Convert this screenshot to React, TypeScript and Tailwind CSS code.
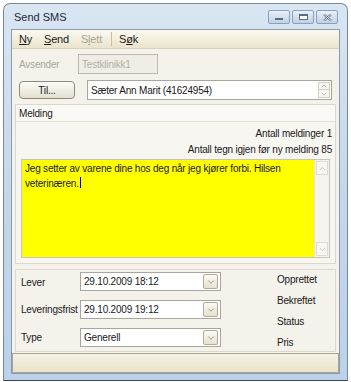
import { ChevronDown, ChevronUp } from 'lucide-react';

function DropButton() {
  return (
    <div className="flex h-[15px] w-[15px] items-center justify-center rounded-[2px] border border-[#b4aa96] bg-gradient-to-b from-[#fbfaf6] to-[#e6e0d0]">
      <ChevronDown size={10} strokeWidth={1.5} className="text-[#6e6a60]" />
    </div>
  );
}

function Combo({ value }: { value: string }) {
  return (
    <div className="flex h-[19px] w-[141px] items-center justify-between border border-[#a9a79c] bg-white pl-[3px] pr-[2px]">
      <span>{value}</span>
      <DropButton />
    </div>
  );
}

export default function App() {
  return (
    <div className="h-[382px] w-[351px] bg-white px-[3px] pb-[1px] pt-[3px] text-[10px] tracking-[-0.2px] text-[#1a1a1a] [font-family:'Liberation_Sans',Arial,sans-serif]">
      <div className="flex h-full flex-col rounded-t-[7px] border border-[#7d8896] border-b-[#3d4650] bg-gradient-to-b from-[#d9e6f3] via-[#c4d7ec] to-[#bcd2ea] px-[7px] pb-[6px]">
        {/* Title bar */}
        <div className="flex h-[25px] items-center justify-between pl-[3px]">
          <span className="pt-[1px] text-[11px] tracking-normal text-[#1c2a3a]">Send SMS</span>
          <div className="flex gap-[2px] pr-[2px] pt-[1px]">
            <div className="flex h-[14px] w-[22px] items-end justify-center rounded-[2px] border border-[#8ba0ba] bg-gradient-to-b from-[#e9f0f8] to-[#bfd1e6] pb-[3px]">
              <div className="h-[2px] w-[8px] border border-[#5c6b80] bg-white" />
            </div>
            <div className="flex h-[14px] w-[22px] items-center justify-center rounded-[2px] border border-[#8ba0ba] bg-gradient-to-b from-[#e9f0f8] to-[#bfd1e6]">
              <div className="h-[6px] w-[9px] border border-[#5c6b80] border-t-2 bg-white" />
            </div>
            <div className="flex h-[14px] w-[22px] items-center justify-center rounded-[2px] border border-[#8ba0ba] bg-gradient-to-b from-[#e9f0f8] to-[#bfd1e6]">
              <svg width="9" height="7" viewBox="0 0 9 7">
                <path d="M1 0.5 L8 6.5 M8 0.5 L1 6.5" stroke="#5c6b80" strokeWidth="2" />
                <path d="M1 0.5 L8 6.5 M8 0.5 L1 6.5" stroke="#ffffff" strokeWidth="0.8" />
              </svg>
            </div>
          </div>
        </div>

        {/* Client */}
        <div className="flex flex-1 flex-col border border-[#8d9aaa] bg-[#f4f2eb]">
          {/* Menu */}
          <div className="flex h-[19px] items-center gap-[12px] border-b border-[#d8d2bd] bg-gradient-to-b from-[#fbf9f1] to-[#ebe4cb] pl-[7px] text-[11px]">
            <span><u>N</u>y</span>
            <span><u>S</u>end</span>
            <span className="text-[#a7a396]">S<u>l</u>ett</span>
            <span className="flex items-center gap-[7px]">
              <span className="-ml-[3px] h-[14px] w-px bg-[#c4bca4]" />
              <span>S<u>ø</u>k</span>
            </span>
          </div>

          {/* Avsender */}
          <div className="mt-[5px] flex items-center pl-[7px]">
            <span className="w-[59px] text-[#a9a69c]">Avsender</span>
            <div className="flex h-[20px] w-[80px] items-center border border-[#bdb9ae] bg-[#efede6] pl-[3px] text-[#b3b0a6]">Testklinikk1</div>
          </div>

          {/* Til */}
          <div className="mt-[6px] flex items-center pl-[7px] pr-[7px]">
            <div className="flex h-[18px] w-[56px] items-center justify-center rounded-[4px] border border-[#8e8a7e] bg-gradient-to-b from-[#fcfbf7] to-[#e5e0d1]">Til...</div>
            <div className="ml-[12px] flex h-[20px] flex-1 items-center justify-between border border-[#a9a79c] bg-white pl-[3px] pr-[1px]">
              <span>Sæter Ann Marit (41624954)</span>
              <div className="flex flex-col">
                <div className="flex h-[8px] w-[12px] items-center justify-center border border-[#d4d0c6] bg-[#f6f5f1]">
                  <ChevronUp size={8} className="text-[#a7a59c]" />
                </div>
                <div className="flex h-[8px] w-[12px] items-center justify-center border border-t-0 border-[#d4d0c6] bg-[#f6f5f1]">
                  <ChevronDown size={8} className="text-[#a7a59c]" />
                </div>
              </div>
            </div>
          </div>

          {/* Melding group */}
          <div className="mx-[3px] mt-[4px] flex h-[160px] flex-col border border-[#dcd8cb] bg-[#f7f6f1]">
            <div className="flex h-[17px] items-center border-b border-[#e6e2d6] bg-[#faf9f5] pl-[3px]">Melding</div>
            <div className="mt-[4px] flex flex-col items-end pr-[3px] leading-[16px]">
              <span>Antall meldinger 1</span>
              <span>Antall tegn igjen før ny melding 85</span>
            </div>
            <div className="mx-[5px] mt-[1px] flex flex-1 border border-[#c8c5b8] bg-[#ffff00]">
              <div className="flex-1 pl-[3px] pt-[2px] leading-[14px]">
                Jeg setter av varene dine hos deg når jeg kjører forbi. Hilsen veterinæren.<span className="ml-px inline-block h-[11px] w-px translate-y-[1px] bg-black" />
              </div>
              <div className="flex w-[15px] flex-col justify-between border-l border-[#e8e6dc] bg-[#f5f4ee] p-px">
                <div className="flex h-[14px] items-center justify-center border border-[#dedbd0] bg-[#f8f7f3]">
                  <ChevronUp size={9} className="text-[#bdbab0]" />
                </div>
                <div className="flex h-[14px] items-center justify-center border border-[#dedbd0] bg-[#f8f7f3]">
                  <ChevronDown size={9} className="text-[#bdbab0]" />
                </div>
              </div>
            </div>
            <div className="h-[5px]" />
          </div>

          {/* Bottom group */}
          <div className="mx-[3px] mt-[5px] flex flex-1 border border-[#dcd8cb] bg-[#f4f2eb] pl-[5px] pt-[2px]">
            <div className="flex flex-col gap-[9px]">
              <div className="flex items-center">
                <span className="w-[59px] pt-[2px]">Lever</span>
                <Combo value="29.10.2009 18:12" />
              </div>
              <div className="flex items-center">
                <span className="w-[59px]">Leveringsfrist</span>
                <Combo value="29.10.2009 19:12" />
              </div>
              <div className="flex items-center">
                <span className="w-[59px]">Type</span>
                <Combo value="Generell" />
              </div>
            </div>
            <div className="ml-[56px] flex flex-col gap-[7px] pt-[1px] leading-[14px]">
              <span>Opprettet</span>
              <span>Bekreftet</span>
              <span>Status</span>
              <span>Pris</span>
            </div>
          </div>

          {/* Status bar */}
          <div className="mt-px h-[20px] border border-[#a9a595] bg-gradient-to-b from-[#f6f2e4] to-[#e9e2cb]" />
        </div>
      </div>
    </div>
  );
}
